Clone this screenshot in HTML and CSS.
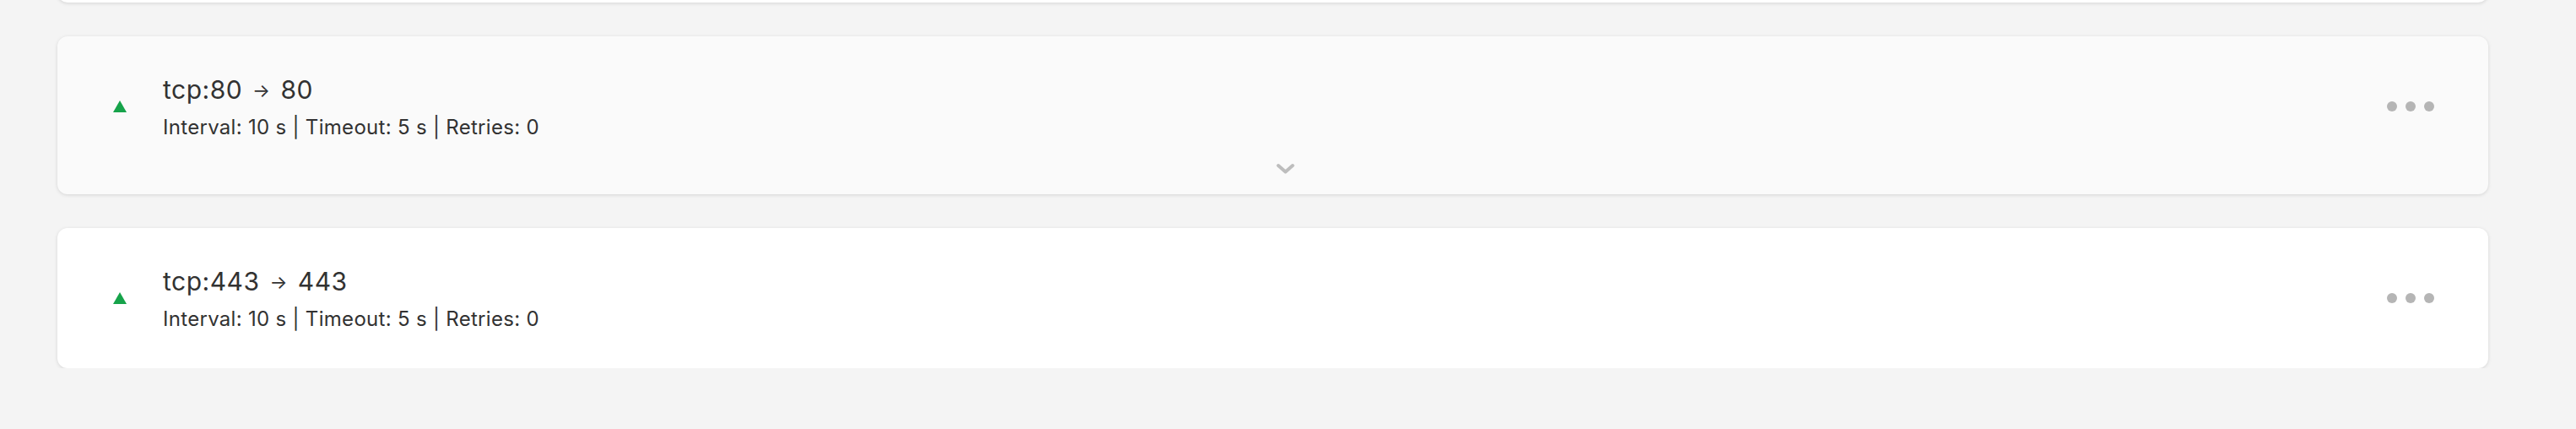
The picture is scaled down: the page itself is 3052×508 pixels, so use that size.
FILE: index.html
```html
<!DOCTYPE html>
<html lang="en">
<head>
<meta charset="utf-8">
<title>Health checks</title>
<link rel="stylesheet" href="styles.css">
</head>
<body>
<div class="list">
  <div class="card card-prev"></div>

  <div class="card card-hover">
    <div class="row">
      <span class="status"></span>
      <div class="info">
        <div class="title">tcp:80 <span class="arrow">→</span> 80</div>
        <div class="meta">Interval: 10 s | Timeout: 5 s | Retries: 0</div>
      </div>
      <div class="menu"><span class="dot"></span><span class="dot"></span><span class="dot"></span></div>
    </div>
    <div class="toggle">
      <svg width="24" height="14" viewBox="0 0 24 14"><polyline points="3.5,3 12,10.5 20.5,3" fill="none" stroke="#bdbdbd" stroke-width="4" stroke-linecap="round" stroke-linejoin="round"/></svg>
    </div>
  </div>

  <div class="card">
    <div class="row">
      <span class="status"></span>
      <div class="info">
        <div class="title">tcp:443 <span class="arrow">→</span> 443</div>
        <div class="meta">Interval: 10 s | Timeout: 5 s | Retries: 0</div>
      </div>
      <div class="menu"><span class="dot"></span><span class="dot"></span><span class="dot"></span></div>
    </div>
  </div>
</div>
</body>
</html>
```

FILE: styles.css
```css
html, body {
  margin: 0;
  padding: 0;
  background: #f4f4f4;
  font-family: Inter, "Noto Sans", sans-serif;
  color: #323232;
}

.list {
  width: 2880px;
  padding-left: 68px;
  display: flex;
  flex-direction: column;
  gap: 40px;
}

.card {
  background: #ffffff;
  border-radius: 12px;
  box-shadow: 0 1px 4px rgba(0, 0, 0, 0.13);
  padding: 45px 64px 43px 66px;
}

.card-prev {
  height: 100px;
  padding: 0;
  margin-top: -97px;
}

.card-hover {
  background: #fafafa;
  padding-bottom: 23px;
}

.row {
  display: flex;
  align-items: center;
}

.status {
  width: 0;
  height: 0;
  border-left: 8px solid transparent;
  border-right: 8px solid transparent;
  border-bottom: 14px solid #16a34a;
  margin-right: 43px;
  margin-top: -2px;
}

.info {
  flex: 1;
  display: flex;
  flex-direction: column;
}

.title {
  font-size: 30px;
  line-height: 36px;
  height: 36px;
  letter-spacing: 0.5px;
}

.arrow {
  font-size: 22px;
  line-height: 0;
  margin: 0 3px;
  vertical-align: 2px;
}

.meta {
  font-size: 24px;
  line-height: 30px;
  letter-spacing: 0.3px;
  margin-top: 12px;
}

.menu {
  display: flex;
  gap: 10px;
  margin-top: -2px;
}

.dot {
  width: 12px;
  height: 12px;
  border-radius: 50%;
  background: #b5b5b5;
}

.toggle {
  display: flex;
  justify-content: center;
  padding-left: 28px;
  margin-top: 27px;
  height: 14px;
}

.toggle svg {
  display: block;
}
```
